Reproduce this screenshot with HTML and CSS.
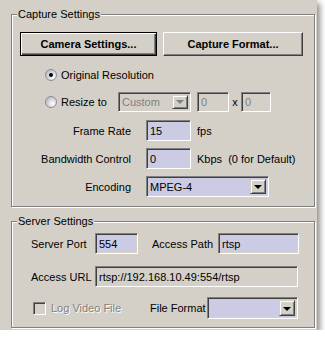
FILE: index.html
```html
<!DOCTYPE html>
<html>
<head>
<meta charset="utf-8">
<link rel="stylesheet" href="styles.css">
</head>
<body>
<div class="window">
  <div class="group capture">
    <span class="group-title">Capture Settings</span>
    <div class="btn-row">
      <div class="btn default camera">Camera Settings...</div>
      <div class="btn format">Capture Format...</div>
    </div>
    <div class="radio-row r1">
      <svg class="radio" width="12" height="12" viewBox="0 0 12 12"><defs><radialGradient id="rg1" cx="65%" cy="65%" r="70%"><stop offset="0" stop-color="#ffffff"/><stop offset="1" stop-color="#b8b8c8"/></radialGradient></defs><circle cx="6" cy="6" r="5.5" fill="url(#rg1)" stroke="#8c8c94"/><circle cx="6" cy="6" r="2" fill="#000"/></svg>
      <span class="radio-label">Original Resolution</span>
    </div>
    <div class="radio-row r2">
      <svg class="radio" width="12" height="12" viewBox="0 0 12 12"><defs><radialGradient id="rg2" cx="65%" cy="65%" r="70%"><stop offset="0" stop-color="#ffffff"/><stop offset="1" stop-color="#b8b8c8"/></radialGradient></defs><circle cx="6" cy="6" r="5.5" fill="url(#rg2)" stroke="#8c8c94"/></svg>
      <span class="radio-label resize">Resize to</span>
      <div class="field combo disabled custom"><span class="val">Custom</span><span class="drop"><span class="tri"></span></span></div>
      <div class="field disabled small w1"><span class="val">0</span></div>
      <span class="times">x</span>
      <div class="field disabled small w2"><span class="val">0</span></div>
    </div>
    <div class="form-row fr">
      <span class="lbl">Frame Rate</span>
      <div class="field num"><span class="val">15</span></div>
      <span class="unit">fps</span>
    </div>
    <div class="form-row bw">
      <span class="lbl">Bandwidth Control</span>
      <div class="field num"><span class="val">0</span></div>
      <span class="unit">Kbps&nbsp; (0 for Default)</span>
    </div>
    <div class="form-row enc">
      <span class="lbl">Encoding</span>
      <div class="field combo encoding"><span class="val">MPEG-4</span><span class="drop"><span class="tri"></span></span></div>
    </div>
  </div>

  <div class="group server">
    <span class="group-title">Server Settings</span>
    <div class="srow s1">
      <span class="slbl">Server Port</span>
      <div class="field port"><span class="val">554</span></div>
      <span class="plbl">Access Path</span>
      <div class="field path"><span class="val">rtsp</span></div>
    </div>
    <div class="srow s2">
      <span class="slbl">Access URL</span>
      <div class="field readonly url"><span class="val">rtsp://192.168.10.49:554/rtsp</span></div>
    </div>
    <div class="srow s3">
      <div class="check-wrap">
        <span class="checkbox"></span>
        <span class="dis-text">Log Video File</span>
      </div>
      <span class="flbl">File Format</span>
      <div class="field combo fileformat"><span class="val"></span><span class="drop"><span class="tri"></span></span></div>
    </div>
  </div>
</div>
</body>
</html>
```

FILE: styles.css
```css
* { box-sizing: border-box; }

body {
  margin: 0;
  background: #ffffff;
  font-family: "Liberation Sans", Arial, sans-serif;
  font-size: 11px;
  color: #000;
}

.window {
  width: 317px;
  height: 330px;
  background: #d4d0c8;
  padding: 14px 2px 2px 11px;
  box-shadow: 3px 3px 6px rgba(0, 0, 0, 0.45);
}

.group {
  position: relative;
  width: 304px;
  border: 1px solid #808080;
  box-shadow: inset 1px 1px 0 #ffffff, 1px 1px 0 #ffffff;
}

.group-title {
  position: absolute;
  top: -7px;
  left: 5px;
  padding: 0 1px;
  line-height: 13px;
  background: #d4d0c8;
}

.capture { padding: 17px 0 9px 0; }
.server { margin-top: 14px; padding: 11px 0 8px 0; }

/* buttons */
.btn-row {
  display: flex;
  gap: 6px;
  margin-left: 8px;
  height: 24px;
}
.btn {
  height: 24px;
  display: flex;
  align-items: center;
  justify-content: center;
  font-weight: bold;
  background: #d4d0c8;
  border: 1px solid;
  border-color: #ffffff #404040 #404040 #ffffff;
  box-shadow: inset -1px -1px 0 #808080;
}
.btn.default {
  border: 1px solid #000;
  box-shadow: inset 1px 1px 0 #ffffff, inset -1px -1px 0 #404040, inset -2px -2px 0 #808080;
}
.camera { width: 137px; }
.format { width: 140px; }

/* radio rows */
.radio-row {
  display: flex;
  align-items: center;
  padding-left: 33px;
}
.r1 { margin-top: 11px; height: 16px; }
.r2 { margin-top: 8px; height: 21px; }
.radio { flex: none; }
.radio-label { margin-left: 4px; }
.resize { width: 57px; }

/* fields */
.field {
  position: relative;
  height: 21px;
  display: flex;
  align-items: center;
  padding: 0 3px;
  background: #cbcbe3;
  border: 1px solid;
  border-color: #808080 #ffffff #ffffff #808080;
  box-shadow: inset 1px 1px 0 #404040, inset -1px -1px 0 #d4d0c8;
  white-space: nowrap;
  overflow: hidden;
}
.field.disabled, .field.readonly { background: #d4d0c8; }
.field.disabled .val { color: #808080; }
.r2 .field { height: 20px; }

.combo { padding-right: 18px; }
.drop {
  position: absolute;
  right: 2px;
  top: 2px;
  bottom: 2px;
  width: 16px;
  background: #d4d0c8;
  border: 1px solid;
  border-color: #d4d0c8 #404040 #404040 #d4d0c8;
  box-shadow: inset 1px 1px 0 #ffffff, inset -1px -1px 0 #808080;
  display: flex;
  align-items: center;
  justify-content: center;
}
.tri {
  width: 0;
  height: 0;
  border-left: 4px solid transparent;
  border-right: 4px solid transparent;
  border-top: 4px solid #000;
  margin-top: 1px;
}
.disabled .tri { border-top-color: #808080; }

.custom { width: 73px; }
.w1 { width: 32px; margin-left: 6px; }
.times { width: 12px; text-align: center; }
.w2 { width: 30px; }

/* form rows */
.form-row {
  display: flex;
  align-items: center;
  height: 21px;
}
.fr { margin-top: 8px; }
.bw, .enc { margin-top: 7px; }
.lbl {
  width: 119px;
  text-align: right;
  margin-right: 15px;
}
.num { width: 45px; }
.unit { margin-left: 6px; white-space: nowrap; }
.encoding { width: 123px; }

/* server rows */
.srow {
  display: flex;
  align-items: center;
  height: 21px;
}
.s1, .s2 { padding-left: 19px; }
.s2 { margin-top: 12px; }
.s3 { margin-top: 10px; padding-left: 21px; height: 22px; }
.slbl { width: 64px; }
.port { width: 43px; }
.plbl { margin-left: 14px; width: 66px; }
.path { width: 81px; }
.url { width: 203px; }

.check-wrap {
  width: 117px;
  display: flex;
  align-items: center;
}
.checkbox {
  width: 13px;
  height: 13px;
  flex: none;
  background: #d4d0c8;
  border: 1px solid;
  border-color: #808080 #ffffff #ffffff #808080;
  box-shadow: inset 1px 1px 0 #404040, inset -1px -1px 0 #d4d0c8;
}
.dis-text {
  margin-left: 5px;
  color: #808080;
  text-shadow: 1px 1px 0 #ffffff;
}
.flbl { width: 57px; }
.fileformat { width: 91px; height: 22px; }
```
